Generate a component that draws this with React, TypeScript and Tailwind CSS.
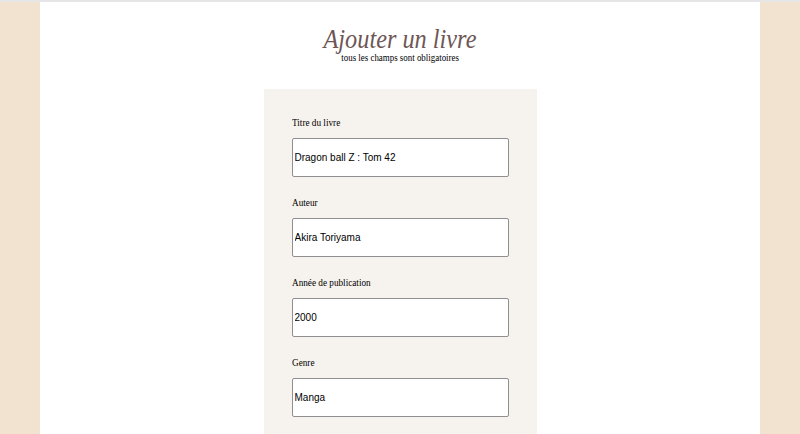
import React from 'react';

const fields = [
  { label: 'Titre du livre', value: 'Dragon ball Z : Tom 42' },
  { label: 'Auteur', value: 'Akira Toriyama' },
  { label: 'Année de publication', value: '2000' },
  { label: 'Genre', value: 'Manga' },
];

const App: React.FC = () => {
  return (
    <div className="h-[434px] w-full overflow-hidden border-t-2 border-[#e6e6e6] bg-[#f1e3cf]">
      <div className="mx-auto h-full w-[720px] bg-white">
        <div className="flex flex-col items-center pt-[24px] font-['Liberation_Serif',serif]">
          <h1 className="scale-x-[0.9] text-[27px] leading-[27px] italic text-[#6e5656]">Ajouter un livre</h1>
          <p className="scale-x-[0.89] text-[10px] leading-[10px] text-black">tous les champs sont obligatoires</p>
        </div>

        <form className="mx-auto mt-[26px] w-[273px] bg-[#f6f2ed] px-[28px] pt-[28px] pb-[20px]">
          {fields.map((f) => (
            <div key={f.label} className="mb-[20px]">
              <label className="block origin-left scale-x-[0.92] font-['Liberation_Serif',serif] text-[10px] leading-[12px] text-black">
                {f.label}
              </label>
              <input
                type="text"
                defaultValue={f.value}
                className="mt-[9px] block h-[39px] w-[217px] rounded-[2px] border border-[#8f8f8f] bg-white px-[2px] font-['Liberation_Sans',sans-serif] text-[10px] text-black outline-none"
              />
            </div>
          ))}
        </form>
      </div>
    </div>
  );
};

export default App;
